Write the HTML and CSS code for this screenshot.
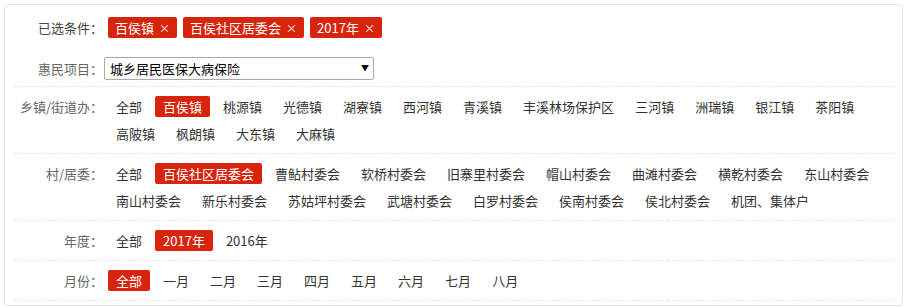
FILE: index.html
```html
<!DOCTYPE html>
<html lang="zh-CN">
<head>
    <meta charset="UTF-8">
    <meta name="viewport" content="width=device-width, initial-scale=1.0">
    <title>惠民项目筛选</title>
    <link rel="stylesheet" href="styles.css">
</head>
<body>

    <div class="filter">
        <div class="head">
            <div class="line">
                <span class="label dark">已选条件<b>：</b></span>
                <div class="tags">
                    <span class="tag">百侯镇<i>×</i></span>
                    <span class="tag">百侯社区居委会<i>×</i></span>
                    <span class="tag">2017年<i>×</i></span>
                </div>
            </div>
            <div class="line">
                <span class="label">惠民项目<b>：</b></span>
                <div class="select-wrap">
                    <select>
                        <option>城乡居民医保大病保险</option>
                    </select>
                    <span class="arrow">▼</span>
                </div>
            </div>
        </div>

        <div class="row">
            <span class="label">乡镇/街道办<b>：</b></span>
            <ul class="opts">
                <li>全部</li>
                <li class="on">百侯镇</li>
                <li>桃源镇</li>
                <li>光德镇</li>
                <li>湖寮镇</li>
                <li>西河镇</li>
                <li>青溪镇</li>
                <li>丰溪林场保护区</li>
                <li>三河镇</li>
                <li>洲瑞镇</li>
                <li>银江镇</li>
                <li>茶阳镇</li>
                <li>高陂镇</li>
                <li>枫朗镇</li>
                <li>大东镇</li>
                <li>大麻镇</li>
            </ul>
        </div>

        <div class="row">
            <span class="label">村/居委<b>：</b></span>
            <ul class="opts">
                <li>全部</li>
                <li class="on">百侯社区居委会</li>
                <li>曹鲇村委会</li>
                <li>软桥村委会</li>
                <li>旧寨里村委会</li>
                <li>帽山村委会</li>
                <li>曲滩村委会</li>
                <li>横乾村委会</li>
                <li>东山村委会</li>
                <li>南山村委会</li>
                <li>新乐村委会</li>
                <li>苏姑坪村委会</li>
                <li>武塘村委会</li>
                <li>白罗村委会</li>
                <li>侯南村委会</li>
                <li>侯北村委会</li>
                <li>机团、集体户</li>
            </ul>
        </div>

        <div class="row">
            <span class="label">年度<b>：</b></span>
            <ul class="opts">
                <li>全部</li>
                <li class="on">2017年</li>
                <li>2016年</li>
            </ul>
        </div>

        <div class="row">
            <span class="label">月份<b>：</b></span>
            <ul class="opts">
                <li class="on">全部</li>
                <li>一月</li>
                <li>二月</li>
                <li>三月</li>
                <li>四月</li>
                <li>五月</li>
                <li>六月</li>
                <li>七月</li>
                <li>八月</li>
            </ul>
        </div>
    </div>

</body>
</html>
```

FILE: styles.css
```css
body {
    margin: 4px;
    font-family: "Noto Sans CJK SC", "Microsoft YaHei", sans-serif;
    font-size: 13px;
    color: #333;
    background: #fff;
}

.filter {
    border: 1px solid #e2e2e2;
    border-radius: 4px;
    padding: 0 8px 4px;
    box-shadow: 0 0 3px rgba(0, 0, 0, 0.06);
}

.head {
    padding: 12px 0 6px;
    border-bottom: 1px dashed #e6e6e6;
}

.line {
    display: flex;
    align-items: center;
}

.line + .line {
    margin-top: 19px;
}

.label {
    flex: none;
    width: 90px;
    text-align: right;
    color: #666;
}

/* centred full-width colon, as in the original */
.label b {
    font-weight: normal;
    font-family: "Noto Sans CJK JP", sans-serif;
}

.label.dark {
    color: #444;
}

.tags {
    display: flex;
    gap: 6px;
    margin-left: 5px;
}

.tag {
    height: 21px;
    line-height: 21px;
    padding: 0 7px;
    background: #d7240c;
    color: #fff;
    border-radius: 2px;
}

.tag i {
    font-style: normal;
    font-size: 11px;
    margin-left: 5px;
}

.select-wrap {
    position: relative;
    margin-left: 1px;
}

.select-wrap select {
    appearance: none;
    -webkit-appearance: none;
    width: 270px;
    height: 23px;
    padding: 0 20px 0 5px;
    border: 1px solid #a9a9a9;
    border-radius: 2px;
    background: #fff;
    font-family: inherit;
    font-size: 13px;
    color: #000;
    outline: none;
}

.select-wrap .arrow {
    position: absolute;
    right: 5px;
    top: 6px;
    font-size: 8px;
    line-height: 10px;
    color: #000;
    pointer-events: none;
}

.row {
    display: flex;
    align-items: flex-start;
    padding: 9px 0;
    border-bottom: 1px dashed #e6e6e6;
}

.row .label {
    line-height: 21px;
}

.opts {
    flex: 1;
    display: flex;
    flex-wrap: wrap;
    gap: 6px 5px;
    margin: 0 0 0 5px;
    padding: 0;
    list-style: none;
}

.opts li {
    height: 21px;
    line-height: 21px;
    padding: 0 8px;
    border-radius: 2px;
    cursor: pointer;
}

.opts li.on {
    background: #d7240c;
    color: #fff;
}
```
